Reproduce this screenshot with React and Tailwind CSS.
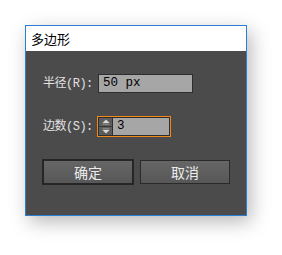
import React from "react";

const cjk = { fontFamily: '"Liberation Mono", "Noto Sans CJK SC", monospace' };

function Spinner() {
  return (
    <div className="flex h-full w-[14px] flex-col bg-[#5c5c5c] border-r border-[#2e2e2e]">
      <div className="flex flex-1 items-center justify-center border-b border-[#3a3a3a]">
        <svg width="8" height="6" viewBox="0 0 8 6">
          <polygon points="4,0.5 7.5,4 0.5,4" fill="#d8d8d8" />
          <rect x="0.5" y="4.6" width="7" height="1" fill="#9a9a9a" />
        </svg>
      </div>
      <div className="flex flex-1 items-center justify-center">
        <svg width="8" height="6" viewBox="0 0 8 6">
          <rect x="0.5" y="0.4" width="7" height="1" fill="#9a9a9a" />
          <polygon points="0.5,2 7.5,2 4,5.5" fill="#d8d8d8" />
        </svg>
      </div>
    </div>
  );
}

export default function App() {
  return (
    <div className="h-[255px] w-[282px] bg-white pl-[25px] pt-[25px]">
      <div className="flex h-[191px] w-[222px] flex-col border border-[#2b7fd3] shadow-[4px_6px_18px_rgba(0,0,0,0.28)]">
        <div
          className="flex h-[25px] items-center bg-white pl-[5px] text-[13px] text-black"
          style={{ fontFamily: '"Noto Sans CJK SC", sans-serif' }}
        >
          多边形
        </div>
        <div className="flex flex-1 flex-col bg-[#4b4b4b] pt-[23px]" style={cjk}>
          <div className="flex h-[19px] items-center pl-[17px]">
            <div className="w-[55px] text-[12px] tracking-[-0.5px] text-[#e2e2e2] whitespace-nowrap">
              半径(R):
            </div>
            <div className="flex h-[19px] w-[95px] items-center border border-[#2e2e2e] bg-[#a6a6a6] pl-[4px] text-[12.5px] text-black">
              50 px
            </div>
          </div>
          <div className="mt-[23px] flex h-[21px] items-center pl-[17px]">
            <div className="w-[54px] text-[12px] tracking-[-0.5px] text-[#e2e2e2] whitespace-nowrap">
              边数(S):
            </div>
            <div className="h-[21px] w-[74px] border border-[#f0891a]">
              <div className="flex h-full w-full border border-[#2e2e2e] bg-[#a6a6a6]">
                <Spinner />
                <div className="flex items-center pl-[4px] text-[12.5px] text-black">3</div>
              </div>
            </div>
          </div>
          <div
            className="mt-[22px] flex items-center gap-[6px] pl-[16px]"
            style={{ fontFamily: '"Noto Sans CJK SC", sans-serif' }}
          >
            <div className="flex h-[26px] w-[92px] items-center justify-center border-2 border-[#262626] bg-gradient-to-b from-[#666666] to-[#575757] text-[14px] text-[#ececec]">
              确定
            </div>
            <div className="flex h-[24px] w-[90px] items-center justify-center border border-[#2a2a2a] bg-gradient-to-b from-[#666666] to-[#575757] text-[14px] text-[#ececec]">
              取消
            </div>
          </div>
        </div>
      </div>
    </div>
  );
}
